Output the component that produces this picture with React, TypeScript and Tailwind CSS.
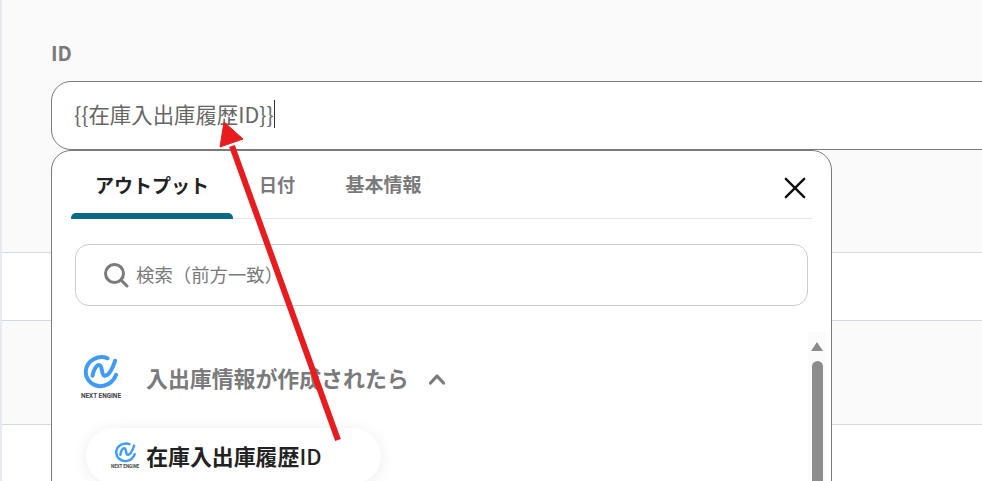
const FONT = "font-['Noto_Sans_CJK_JP','Noto_Sans',sans-serif]";

const NextEngineLogo = ({ small }: { small?: boolean }) => (
  <div className="flex flex-col items-center">
    <svg
      viewBox="0 0 40 36"
      className={small ? "h-[21px] w-[23px]" : "h-[34px] w-[38px]"}
      fill="none"
      stroke="#3f9bf5"
      strokeWidth="4.2"
      strokeLinecap="round"
    >
      <path d="M27 3.5C17 -0.5 5 6 4 16.5C3 27 13 35 23 32.5C30 31 34 26 36 21" />
      <path d="M11 22C12 16 15 10.5 18 10.5C22 10.5 20 22 24 22C28.5 22 32 15 35 6" />
    </svg>
    <span
      className={
        small
          ? "mt-[1px] text-[4.5px] leading-[6px] font-bold text-[#444] whitespace-nowrap font-['Roboto',sans-serif]"
          : "mt-[3px] text-[6.4px] leading-[9px] font-bold text-[#444] whitespace-nowrap font-['Roboto',sans-serif]"
      }
    >
      NEXT ENGINE
    </span>
  </div>
);

const Picker = () => (
  <div className="absolute left-[49px] top-[150px] w-[781px] h-[360px] bg-white border border-[#7a7a7a] rounded-[20px]">
    {/* tabs */}
    <div className="flex h-[68px] mx-[19px] border-b border-[#e6e6e6] relative">
      <div className="w-[162px] h-[68px] flex items-center justify-center text-[19px] font-bold text-[#222] relative">
        アウトプット
        <div className="absolute left-0 right-0 bottom-0 h-[6px] bg-[#0a6a85] rounded-t-[5px]" />
      </div>
      <div className="w-[88px] flex items-center justify-center text-[18px] font-bold text-[#7a7a7a]">日付</div>
      <div className="ml-[6px] w-[113px] flex items-center justify-center text-[19px] font-bold text-[#7a7a7a]">基本情報</div>
      <svg viewBox="0 0 24 24" className="absolute left-[713px] top-[26px] w-[22px] h-[22px]" fill="none" stroke="#111" strokeWidth="2.6" strokeLinecap="round">
        <path d="M2 2L22 22M22 2L2 22" />
      </svg>
    </div>

    {/* search */}
    <div className="ml-[23px] mt-[25px] w-[733px] h-[62px] border border-[#cccccc] rounded-[14px] flex items-center pl-[27px]">
      <svg viewBox="0 0 26 26" className="w-[26px] h-[26px]" fill="none" stroke="#7a7a7a" strokeWidth="3" strokeLinecap="round">
        <circle cx="11.5" cy="11.5" r="9" />
        <path d="M18.5 18.5L24 24" />
      </svg>
      <span className="ml-[7px] text-[18.4px] text-[#7a7a7a]">検索（前方一致）</span>
    </div>

    {/* section heading */}
    <div className="flex items-start ml-[29px] mt-[49px]">
      <NextEngineLogo />
      <span className="ml-[25px] mt-[8px] text-[21.9px] leading-[30px] font-bold text-[#7a7a7a]">入出庫情報が作成されたら</span>
      <svg viewBox="0 0 18 12" className="ml-[19px] mt-[18px] w-[18px] h-[12px]" fill="none" stroke="#7a7a7a" strokeWidth="3.2" strokeLinecap="round" strokeLinejoin="round">
        <path d="M2.5 10L9 3L15.5 10" />
      </svg>
    </div>

    {/* output item */}
    <div className="ml-[34px] mt-[27px] w-[295px] h-[56px] rounded-full bg-white shadow-[0_2px_16px_rgba(0,0,0,0.08)] flex items-center pl-[25px]">
      <NextEngineLogo small />
      <span className="ml-[7px] text-[21.9px] font-bold text-[#222]">
        在庫入出庫履歴<span className="font-medium">ID</span>
      </span>
    </div>

    {/* scrollbar */}
    <div className="absolute left-[756px] top-[181px] w-[18px] h-[180px] bg-[#fbfbfb] flex flex-col items-center pt-[10px]">
      <div className="w-0 h-0 border-l-[6.5px] border-r-[6.5px] border-b-[9px] border-l-transparent border-r-transparent border-b-[#8c8c8c]" />
      <div className="mt-[10px] w-[11px] flex-1 rounded-t-full bg-[#8c8c8c]" />
    </div>
  </div>
);

const App = () => {
  return (
    <div className={`relative w-[982px] h-[481px] overflow-hidden bg-[#fafafa] border-l-2 border-[#e6e9f0] ${FONT}`}>
      <div className="pl-[49px] pt-[41px]">
        <div className="h-[24px] leading-[24px] text-[20px] font-bold text-[#7a7a7a]">ID</div>
        <div className="mt-[16px] w-[1000px] h-[69px] bg-white border border-[#7a7a7a] rounded-[20px] pl-[22px] pb-[3px] flex items-center text-[21.4px] text-[#666]">
          {"{{在庫入出庫履歴ID}}"}
          <span className="w-[1px] h-[28px] bg-[#333]" />
        </div>
      </div>

      {/* rows behind the picker */}
      <div className="h-[103px] border-b border-[#d5d9e0]" />
      <div className="h-[68px] bg-white border-b border-[#d5d9e0]" />
      <div className="h-[104px] border-b border-[#d5d9e0]" />
      <div className="h-[60px] bg-white" />

      <Picker />

      {/* annotation arrow */}
      <svg viewBox="0 0 982 481" className="absolute left-[-2px] top-0 w-[982px] h-[481px] pointer-events-none">
        <path d="M338 440L232 146" stroke="#e81c1f" strokeWidth="6" />
        <path d="M224 122L243 139L220 147Z" fill="#e81c1f" stroke="#e81c1f" strokeWidth="1" />
      </svg>
    </div>
  );
};

export default App;
